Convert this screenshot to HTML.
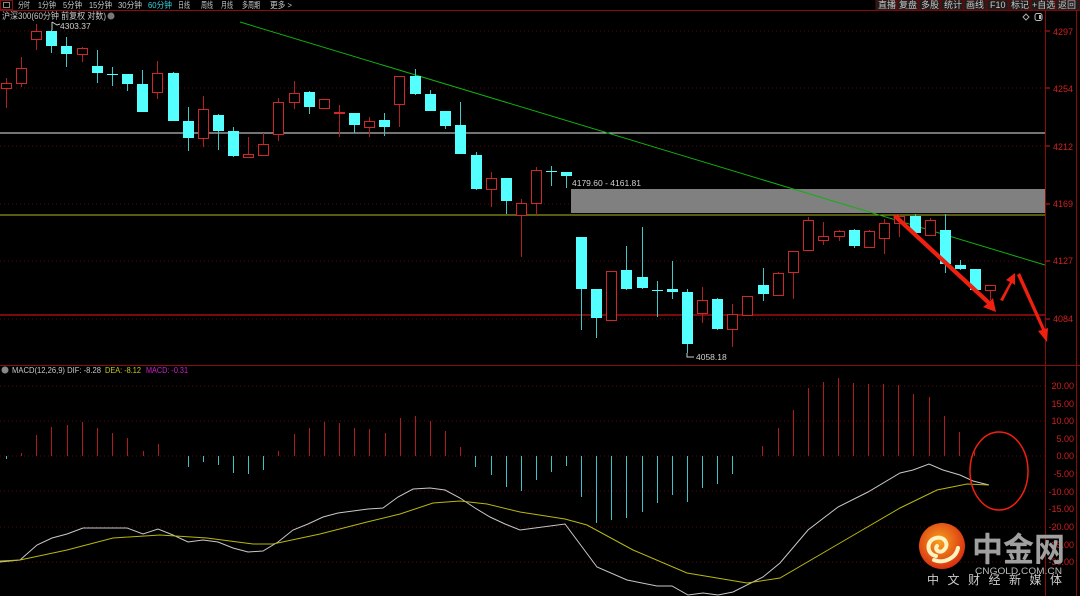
<!DOCTYPE html>
<html><head><meta charset="utf-8"><style>
html,body{margin:0;padding:0;background:#000;width:1080px;height:596px;overflow:hidden}
svg{display:block}
text{font-family:"Liberation Sans","Noto Sans CJK SC",sans-serif}
</style></head><body>
<svg id="s" width="1080" height="596" viewBox="0 0 1080 596" xmlns="http://www.w3.org/2000/svg">
<rect width="1080" height="596" fill="#000"/>
<!-- top bar -->
<line x1="0" y1="10.5" x2="1080" y2="10.5" stroke="#8a0c0c"/>
<rect x="0.5" y="0.5" width="12" height="9" fill="none" stroke="#8a0c0c"/>
<rect x="3.5" y="2.5" width="6" height="5" fill="none" stroke="#888"/>
<g font-size="8.5" fill="#c8c8c8">
<text x="18" y="8" textLength="12" lengthAdjust="spacingAndGlyphs">分时</text>
<text x="38" y="8" textLength="18" lengthAdjust="spacingAndGlyphs">1分钟</text>
<text x="63" y="8" textLength="19" lengthAdjust="spacingAndGlyphs">5分钟</text>
<text x="89" y="8" textLength="23" lengthAdjust="spacingAndGlyphs">15分钟</text>
<text x="118" y="8" textLength="24" lengthAdjust="spacingAndGlyphs">30分钟</text>
<text x="148" y="8" textLength="24" lengthAdjust="spacingAndGlyphs" fill="#3ad0e0">60分钟</text>
<text x="178" y="8" textLength="12" lengthAdjust="spacingAndGlyphs">日线</text>
<text x="201" y="8" textLength="12" lengthAdjust="spacingAndGlyphs">周线</text>
<text x="221" y="8" textLength="12" lengthAdjust="spacingAndGlyphs">月线</text>
<text x="242" y="8" textLength="18" lengthAdjust="spacingAndGlyphs">多周期</text>
<text x="270" y="8" textLength="22" lengthAdjust="spacingAndGlyphs">更多 &gt;</text>
</g>
<g font-size="9" fill="#c8c8c8" stroke="none">
<rect x="876" y="0" width="20" height="10" fill="#1c1c1c" stroke="#5a0a0a"/><text x="878" y="8">直播</text>
<rect x="897" y="0" width="21" height="10" fill="#1c1c1c" stroke="#5a0a0a"/><text x="899" y="8">复盘</text>
<rect x="919" y="0" width="21" height="10" fill="#1c1c1c" stroke="#5a0a0a"/><text x="921" y="8">多股</text>
<rect x="941" y="0" width="22" height="10" fill="#1c1c1c" stroke="#5a0a0a"/><text x="944" y="8">统计</text>
<rect x="964" y="0" width="22" height="10" fill="#1c1c1c" stroke="#5a0a0a"/><text x="966" y="8">画线</text>
<rect x="987" y="0" width="21" height="10" fill="#1c1c1c" stroke="#5a0a0a"/><text x="990" y="8">F10</text>
<rect x="1009" y="0" width="21" height="10" fill="#1c1c1c" stroke="#5a0a0a"/><text x="1011" y="8">标记</text>
<rect x="1031" y="0" width="24" height="10" fill="#1c1c1c" stroke="#5a0a0a"/><text x="1032" y="8">+自选</text>
<rect x="1056" y="0" width="24" height="10" fill="#1c1c1c" stroke="#5a0a0a"/><text x="1058" y="8">返回</text>
</g>
<text x="2" y="19" font-size="9" fill="#c8c8c8" textLength="104" lengthAdjust="spacingAndGlyphs">沪深300(60分钟 前复权 对数)</text>
<circle cx="111" cy="16" r="3.5" fill="#777"/>
<path d="M1026 14 l3 3 l-3 3 l-3 -3z" fill="none" stroke="#aaa"/>
<rect x="1035" y="13.5" width="7" height="7" rx="2" fill="none" stroke="#bbb"/><rect x="1039" y="15" width="2" height="4" fill="#bbb"/>
<!-- axis -->
<line x1="1045.5" y1="10" x2="1045.5" y2="596" stroke="#8a0c0c"/>
<line x1="1076.5" y1="10" x2="1076.5" y2="596" stroke="#8a0c0c"/>
<line x1="0" y1="365.5" x2="1080" y2="365.5" stroke="#8a0c0c"/>
<g stroke="#5a0808" stroke-dasharray="1,3">
<line x1="0" y1="31" x2="1045" y2="31"/><line x1="0" y1="88" x2="1045" y2="88"/><line x1="0" y1="146" x2="1045" y2="146"/>
<line x1="0" y1="204" x2="1045" y2="204"/><line x1="0" y1="261" x2="1045" y2="261"/><line x1="0" y1="319" x2="1045" y2="319"/>
<line x1="0" y1="386" x2="1045" y2="386"/><line x1="0" y1="421" x2="1045" y2="421"/><line x1="0" y1="456" x2="1045" y2="456"/>
<line x1="0" y1="491" x2="1045" y2="491"/><line x1="0" y1="527" x2="1045" y2="527"/><line x1="0" y1="562" x2="1045" y2="562"/>
</g>
<g font-size="9" fill="#d02020" text-anchor="end">
<text x="1073" y="35">4297</text><text x="1073" y="92">4254</text><text x="1073" y="150">4212</text>
<text x="1073" y="207">4169</text><text x="1073" y="264">4127</text><text x="1073" y="322">4084</text>
<text x="1074" y="389">20.00</text><text x="1074" y="407">15.00</text><text x="1074" y="424">10.00</text>
<text x="1074" y="442">5.00</text><text x="1074" y="459">0.00</text><text x="1074" y="477">-5.00</text>
<text x="1074" y="495">-10.00</text><text x="1074" y="512">-15.00</text><text x="1074" y="530">-20.00</text>
<text x="1074" y="548">-25.00</text><text x="1074" y="565">-30.00</text>
</g>
<g stroke="#d02020"><line x1="1046" y1="31" x2="1050" y2="31"/><line x1="1046" y1="88" x2="1050" y2="88"/><line x1="1046" y1="146" x2="1050" y2="146"/><line x1="1046" y1="204" x2="1050" y2="204"/><line x1="1046" y1="261" x2="1050" y2="261"/><line x1="1046" y1="319" x2="1050" y2="319"/></g>
<!-- lines -->
<line x1="0" y1="133" x2="1045" y2="133" stroke="#e8e8e8"/>
<rect x="571" y="189" width="474" height="24" fill="#808080"/>
<text x="572" y="186" font-size="8.5" fill="#d0d0d0">4179.60 - 4161.81</text>
<line x1="0" y1="215" x2="1045" y2="215" stroke="#b8b820"/>
<line x1="0" y1="315" x2="1045" y2="315" stroke="#a01010" stroke-width="1.5"/>
<line x1="240" y1="22" x2="1045" y2="265" stroke="#10b010"/>
<g id="c"></g>
<text x="60" y="29" font-size="8.5" fill="#d0d0d0">4303.37</text>
<path d="M52 30 V22 M52 22 l5 3 l3 -1" stroke="#ccc" fill="none"/>
<path d="M687 353 V357 H694" stroke="#ccc" fill="none"/>
<text x="696" y="360" font-size="8.5" fill="#d0d0d0">4058.18</text>
<!-- arrows -->
<g fill="#f02010">
<polygon points="896,214 990,301 993,298 996,312 983,307 987,304 893,217"/>
<polygon points="1000,300 1010,282 1006,280 1015,273 1015,285 1012,283 1003,301"/>
<polygon points="1017,275 1042,330 1038,331 1047,342 1048,328 1045,329 1020,273"/>
</g>
<!-- MACD -->
<circle cx="5" cy="370" r="3.5" fill="#888"/>
<text x="12" y="373" font-size="8.5" fill="#c8c8c8" textLength="89" lengthAdjust="spacingAndGlyphs">MACD(12,26,9)  DIF: -8.28</text>
<text x="105" y="373" font-size="8.5" fill="#c8c820" textLength="36" lengthAdjust="spacingAndGlyphs">DEA: -8.12</text>
<text x="146" y="373" font-size="8.5" fill="#d020d0" textLength="42" lengthAdjust="spacingAndGlyphs">MACD: -0.31</text>
<g id="m"></g>
<polyline fill="none" stroke="#c8c8c8" points="0,562 20,560 37,545 52,538 67,534 83,528 107,528 127,528 143,534 158,529 173,535 188,542 203,540 218,542 233,548 248,552 263,551 278,542 293,530 308,524 323,517 338,513 353,511 368,509 383,508 398,497 413,489 430,488 445,490 460,498 475,508 490,517 505,524 520,530 565,524 597,567 627,580 657,586 672,586 688,595 703,593 718,595 733,592 763,577 780,563 808,530 838,507 868,492 900,473 913,470 929,464 943,470 960,475 973,481 989,485"/>
<polyline fill="none" stroke="#b8b810" points="0,561 20,560 67,550 113,538 160,535 207,538 253,544 273,544 320,534 367,522 400,514 433,503 460,501 487,504 520,512 565,519 587,525 633,550 687,573 747,583 780,578 840,543 900,508 937,490 967,484 989,485"/>
<ellipse cx="999" cy="471" rx="29" ry="39" fill="none" stroke="#f02010" stroke-width="1.5"/>
<!-- logo -->
<defs><radialGradient id="g" cx="45%" cy="40%" r="60%"><stop offset="0" stop-color="#f8a020"/><stop offset="1" stop-color="#d83010"/></radialGradient></defs>
<circle cx="942" cy="546" r="23" fill="url(#g)"/>
<path d="M936 556 c-10 -2 -10 -16 0 -18 c8 -2 14 6 8 12 c-4 4 -10 0 -7 -4 M934 560 c10 4 22 -2 24 -12" fill="none" stroke="#fff4c0" stroke-width="4" stroke-linecap="round"/>
<text x="972" y="561" font-size="33" font-weight="bold" fill="#a0a0a0" font-family="'Noto Sans CJK SC',sans-serif" textLength="93" lengthAdjust="spacingAndGlyphs">中金网</text>
<text x="975" y="574" font-size="9.5" fill="#bbb" textLength="87" lengthAdjust="spacingAndGlyphs">CNGOLD.COM.CN</text>
<text x="927" y="584" font-size="12" fill="#ccc" textLength="135" lengthAdjust="spacing">中文财经新媒体</text>
</svg>
<script>
var C=[[6,83,88,78,108,'r'],[21,68,83,57,87,'r'],[36,31,39,24,50,'r'],[51,31,46,30,53,'c'],[66,46,54,37,67,'c'],[82,48,54,47,62,'r'],[97,66,73,50,83,'c'],[112,74,75,67,86,'c'],[127,74,84,74,91,'c'],[142,84,112,70,112,'c'],[157,73,92,61,99,'r'],[173,73,121,72,121,'c'],[188,121,138,107,151,'c'],[203,109,138,96,147,'r'],[218,115,131,114,150,'c'],[233,131,156,127,157,'c'],[248,154,157,137,158,'r'],[263,144,155,133,155,'r'],[278,102,134,98,141,'r'],[294,93,102,81,109,'r'],[309,92,107,91,114,'c'],[324,99,108,99,109,'r'],[339,112,113,105,137,'r'],[354,113,125,113,133,'c'],[369,121,127,117,137,'r'],[384,120,127,113,136,'c'],[399,76,104,76,127,'r'],[415,76,94,69,95,'c'],[430,94,111,90,111,'c'],[445,111,126,111,129,'c'],[460,125,154,102,154,'c'],[476,155,189,152,190,'c'],[491,178,189,172,207,'r'],[506,178,201,178,214,'c'],[521,203,215,199,257,'r'],[536,170,203,167,215,'r'],[551,171,172,166,186,'c'],[566,172,176,172,188,'c'],[581,237,289,237,330,'c'],[596,289,318,289,338,'c'],[611,271,320,271,320,'r'],[626,270,289,246,290,'c'],[642,277,288,227,289,'c'],[657,290,291,281,317,'c'],[672,289,292,261,299,'c'],[687,292,344,289,353,'c'],[702,300,313,287,323,'r'],[717,299,329,298,330,'c'],[732,314,329,304,347,'r'],[747,296,315,296,316,'r'],[763,285,294,268,301,'c'],[778,273,295,272,296,'r'],[793,251,272,251,299,'r'],[808,220,250,217,250,'r'],[823,236,240,222,245,'r'],[839,231,236,230,241,'r'],[854,230,246,229,248,'c'],[869,231,247,230,248,'r'],[884,223,238,219,254,'r'],[899,216,223,214,237,'r'],[915,216,233,214,234,'c'],[930,220,235,218,236,'r'],[945,230,264,214,273,'c'],[960,265,269,260,270,'c'],[975,269,290,269,291,'c'],[990,285,290,285,300,'r']];
var g=document.getElementById('c'),h='';
C.forEach(function(d){var x=d[0],col=d[5]=='r'?'#d02828':'#54ffff';
h+='<line x1="'+(x+.5)+'" y1="'+d[3]+'" x2="'+(x+.5)+'" y2="'+d[4]+'" stroke="'+(d[5]=='r'?'#b02020':'#40c8c8')+'"/>';
var hgt=Math.max(d[2]-d[1],1);
if(d[5]=='r')h+='<rect x="'+(x-4.5)+'" y="'+(d[1]+.5)+'" width="10" height="'+hgt+'" fill="#000" stroke="'+col+'"/>';
else h+='<rect x="'+(x-5)+'" y="'+d[1]+'" width="11" height="'+hgt+'" fill="'+col+'"/>';});
g.innerHTML=h;
var M=[[6,459],[21,453],[36,435],[51,427],[67,425],[82,422],[97,428],[112,433],[127,438],[143,451],[158,444],[188,467],[203,462],[218,465],[233,473],[248,474],[263,470],[278,451],[294,434],[309,428],[324,422],[339,423],[354,428],[369,429],[385,433],[400,418],[415,416],[430,421],[445,431],[460,447],[475,467],[491,475],[506,487],[521,491],[536,480],[551,472],[566,466],[581,497],[596,523],[611,520],[626,518],[642,512],[657,503],[672,495],[687,502],[702,488],[717,484],[732,474],[762,446],[778,428],[793,410],[808,388],[823,382],[838,378],[853,383],[868,384],[883,384],[898,385],[913,394],[929,397],[944,416],[959,432],[974,452]];
h='';M.forEach(function(d){var r=d[1]<456;h+='<line x1="'+(d[0]+.5)+'" y1="456" x2="'+(d[0]+.5)+'" y2="'+d[1]+'" stroke="'+(r?'#b01c1c':'#40c0c8')+'"/>';});
document.getElementById('m').innerHTML=h;
</script>
</body></html>
